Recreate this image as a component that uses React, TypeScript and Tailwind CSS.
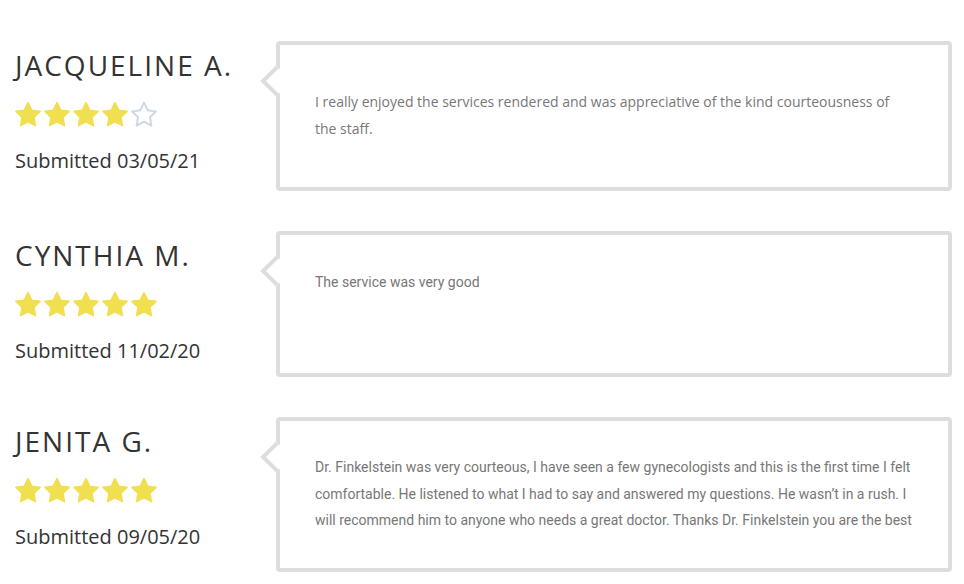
import React from "react";

type Review = {
  name: string;
  rating: number;
  date: string;
  text: string;
  height: string;
  pad: string;
  font: string;
};

const reviews: Review[] = [
  {
    name: "JACQUELINE A.",
    rating: 4,
    date: "03/05/21",
    text: "I really enjoyed the services rendered and was appreciative of the kind courteousness of the staff.",
    height: "h-[150px]",
    pad: "pt-[44px]",
    font: "font-['Open_Sans',sans-serif]",
  },
  {
    name: "CYNTHIA M.",
    rating: 5,
    date: "11/02/20",
    text: "The service was very good",
    height: "h-[146px]",
    pad: "pt-[34px]",
    font: "font-['Roboto',sans-serif]",
  },
  {
    name: "JENITA G.",
    rating: 5,
    date: "09/05/20",
    text: "Dr. Finkelstein was very courteous, I have seen a few gynecologists and this is the first time I felt comfortable. He listened to what I had to say and answered my questions. He wasn\u2019t in a rush. I will recommend him to anyone who needs a great doctor. Thanks Dr. Finkelstein you are the best",
    height: "h-[155px]",
    pad: "pt-[33px]",
    font: "font-['Roboto',sans-serif]",
  },
];

const STAR =
  "M14 1.6l3.7 7.6 8.3 1.2-6 5.9 1.4 8.3L14 20.7l-7.4 3.9 1.4-8.3-6-5.9 8.3-1.2z";

function Star({ filled }: { filled: boolean }) {
  return (
    <svg width="28" height="26" viewBox="0 0 28 26" className="shrink-0">
      {filled ? (
        <path d={STAR} fill="#f0df4f" stroke="#f0df4f" strokeWidth="1.6" strokeLinejoin="round" />
      ) : (
        <path d={STAR} fill="none" stroke="#cdd9e3" strokeWidth="2" strokeLinejoin="round" />
      )}
    </svg>
  );
}

export default function App() {
  return (
    <div className="min-h-screen bg-white pt-[41px] pr-[12px] flex flex-col gap-[40px]">
      {reviews.map((r, idx) => (
        <div key={idx} className="flex items-start">
          <div className="w-[276px] shrink-0 pl-[15px] pt-[7px]">
            <div className="text-[28px] leading-[34px] tracking-[2px] text-[#333333] font-['Open_Sans',sans-serif]">
              {r.name}
            </div>
            <div className="mt-[19px] flex gap-[1px] -ml-[1px]">
              {Array.from({ length: 5 }).map((_, i) => (
                <Star key={i} filled={i < r.rating} />
              ))}
            </div>
            <div className="mt-[20px] text-[20px] leading-[28px] text-[#333333] font-['Open_Sans',sans-serif]">
              Submitted {r.date}
            </div>
          </div>
          <div
            className={`relative flex-1 ${r.height} ${r.pad} px-[35px] border-4 border-[#dddddd] rounded-[4px] bg-white`}
          >
            <div className="absolute left-[-15px] top-[25px] w-[22px] h-[22px] rotate-45 bg-white border-l-4 border-b-4 border-[#dddddd]" />
            <p className={`relative text-[14px] leading-[26.5px] text-[#777777] ${r.font}`}>
              {r.text}
            </p>
          </div>
        </div>
      ))}
    </div>
  );
}
